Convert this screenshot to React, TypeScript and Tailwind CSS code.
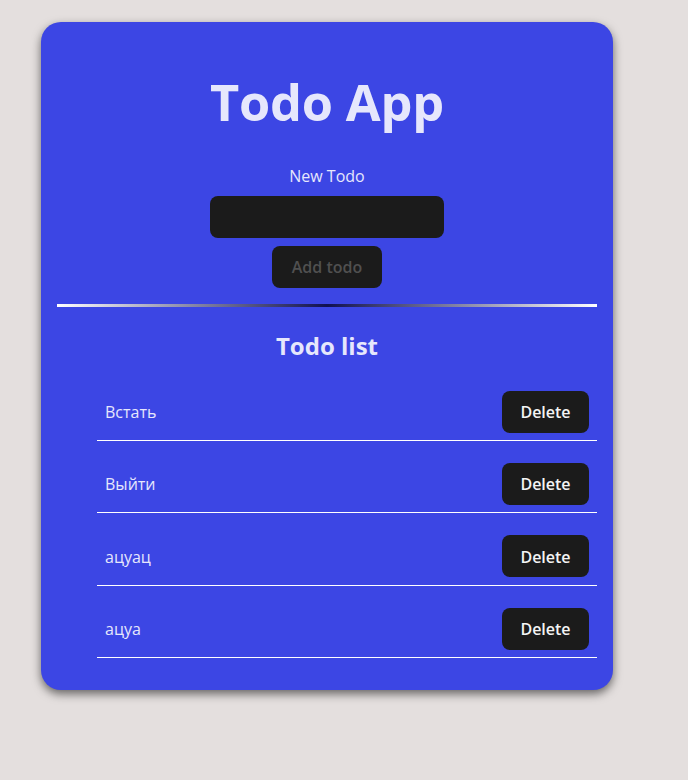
import React from "react";

const todos = ["Встать", "Выйти", "ацуац", "ацуа"];

export default function App() {
  return (
    <div
      className="min-h-[780px] bg-[#e4dfde] pt-[22px] pl-[41px]"
      style={{ fontFamily: '"Open Sans", "Noto Sans", sans-serif' }}
    >
      <div className="w-[572px] rounded-[20px] bg-[#3c46e4] px-4 pt-[52px] pb-[32.4px] text-[#e6e7fc] shadow-[0_4px_10px_rgba(0,0,0,0.55)]">
        <h1 className="text-center text-[50.5px] font-bold leading-[1.1] tracking-[-0.2px]">Todo App</h1>
        <div className="mt-[33px] flex flex-col items-center">
          <label className="text-[16px] leading-6 pt-px">New Todo</label>
          <input className="mt-[8px] h-[42px] w-[234px] rounded-lg bg-[#1b1b1b] outline-none" />
          <button className="mt-2 h-[42px] w-[110px] rounded-lg bg-[#1b1b1b] pt-px text-[16px] font-semibold text-[#505050]">
            Add todo
          </button>
        </div>
        <div className="mt-4 h-[3px] bg-[linear-gradient(to_right,#ffffff,#101050,#ffffff)]" />
        <h2 className="mt-[21px] text-center text-[24px] font-bold leading-9">Todo list</h2>
        <ul className="mt-[5px] pl-10">
          {todos.map((t) => (
            <li
              key={t}
              className="flex items-center justify-between border-b border-white pt-[22px] pb-[7.33px] pl-2 pr-2"
            >
              <span className="pt-px text-[16px]">{t}</span>
              <button className="h-[42px] w-[87px] rounded-lg bg-[#1b1b1b] pt-px text-[16px] font-semibold text-[#f4f4f4]">
                Delete
              </button>
            </li>
          ))}
        </ul>
      </div>
    </div>
  );
}
